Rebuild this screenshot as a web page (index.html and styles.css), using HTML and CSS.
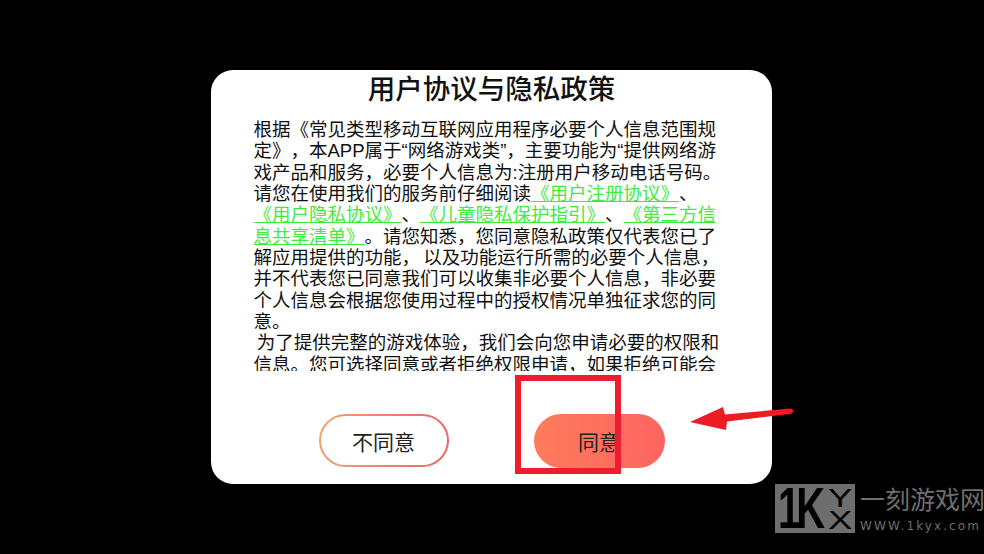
FILE: index.html
```html
<!DOCTYPE html>
<html lang="zh-CN">
<head>
<meta charset="utf-8">
<title>用户协议与隐私政策</title>
<link rel="stylesheet" href="styles.css">
</head>
<body>
<main class="card">
  <h1 class="title">用户协议与隐私政策</h1>
  <div class="content">
    <p class="body-text">根据《常见类型移动互联网应用程序必要个人信息范围规<br>定》，本APP属于“网络游戏类”，主要功能为“提供网络游<br>戏产品和服务，必要个人信息为:注册用户移动电话号码。<br>请您在使用我们的服务前仔细阅读<a class="link">《用户注册协议》</a>、<br><a class="link">《用户隐私协议》</a>、<a class="link">《儿童隐私保护指引》</a>、<a class="link">《第三方信<br>息共享清单》</a>。请您知悉，您同意隐私政策仅代表您已了<br>解应用提供的功能，<span class="thin-space">&nbsp;</span>以及功能运行所需的必要个人信息，<br>并不代表您已同意我们可以收集非必要个人信息，非必要<br>个人信息会根据您使用过程中的授权情况单独征求您的同<br>意。<br><span class="thin-space">&nbsp;</span>为了提供完整的游戏体验，我们会向您申请必要的权限和<br>信息。您可选择同意或者拒绝权限申请，如果拒绝可能会</p>
  </div>
  <div class="actions">
    <button class="btn btn-outline"><span class="btn-outline-inner">不同意</span></button>
    <button class="btn btn-solid">同意</button>
  </div>
</main>
<div class="red-box"></div>
<svg class="arrow" width="110" height="30" viewBox="0 0 110 30"><path d="M0 16 L33 1 L35 8.500 L100 2.500 Q103 2.500 103 5 Q103 7.500 100 8 L37 15.500 L36 24 Z" fill="#ed1c24"/></svg>
<div class="watermark">
  <div class="wm-logo"><span class="wm-big">1K</span><span class="wm-small"><span>Y</span><span>X</span></span></div>
  <div class="wm-text"><span class="wm-cn">一刻游戏网</span><span class="wm-url">WWW.1kyx.com</span></div>
</div>
</body>
</html>
```
FILE: styles.css
```css
* { box-sizing: border-box; }
html, body { margin: 0; height: 100%; }
body {
  background: #000;
  display: flex;
  align-items: center;
  justify-content: center;
  font-family: "Liberation Sans", "Noto Sans CJK SC", sans-serif;
  overflow: hidden;
}
.card {
  width: 561px;
  height: 414px;
  background: #fff;
  border-radius: 22px;
  display: flex;
  flex-direction: column;
  align-items: center;
  margin-left: -1px;
}
.title {
  margin: 0;
  padding-top: 2px;
  font-size: 27.5px;
  line-height: 36px;
  font-weight: 500;
  color: #111;
}
.content {
  margin-top: 11px;
  width: 476px;
  height: 252px;
  overflow: hidden;
}
.body-text {
  margin: 0;
  font-size: 18.5px;
  line-height: 21.35px;
  white-space: nowrap;
  color: #111;
  text-spacing-trim: space-all;
  text-autospace: no-autospace;
}
.thin-space { letter-spacing: -2px; }
.link { color: #3dec3d; text-decoration: underline; }
.actions {
  margin-top: 43px;
  display: flex;
  gap: 85px;
}
.btn {
  width: 130px;
  height: 53px;
  border: 0;
  padding: 0;
  border-radius: 27px;
  font-family: inherit;
  font-size: 21px;
  color: #222;
}
.btn-outline {
  background: linear-gradient(90deg, #f3a070, #e8686a);
  padding: 2px;
}
.btn-outline-inner {
  display: flex;
  align-items: center;
  justify-content: center;
  width: 100%;
  height: 100%;
  background: #fff;
  border-radius: 25px;
}
.btn-solid {
  width: 131px;
  height: 54px;
  background: linear-gradient(90deg, #fe7c5c, #fe6461);
}
.red-box {
  position: absolute;
  left: 515px;
  top: 375px;
  width: 106px;
  height: 99px;
  border: 6px solid #ed1c2e;
}
.arrow {
  position: absolute;
  left: 690px;
  top: 406px;
}
.watermark {
  position: absolute;
  left: 775px;
  top: 484px;
  display: flex;
  gap: 5px;
  color: #6e6e6e;
}
.wm-logo {
  width: 80px;
  height: 49px;
  background: #6e6e6e;
  color: #000;
  display: flex;
  align-items: center;
  justify-content: space-between;
  padding: 0 3px 0 3px;
  font-family: "Liberation Sans", sans-serif;
  font-weight: 700;
}
.wm-big {
  display: block;
  font-size: 40px;
  line-height: 49px;
  letter-spacing: -4px;
  transform: scaleY(1.45);
}
.wm-small {
  display: flex;
  flex-direction: column;
  font-size: 26px;
  line-height: 22px;
  font-weight: 400;
  transform: scaleX(1.4);
  transform-origin: right center;
}
.wm-text { display: flex; flex-direction: column; }
.wm-cn { font-size: 25px; line-height: 32px; white-space: nowrap; }
.wm-url {
  margin-top: 3px;
  font-size: 12px;
  line-height: 14px;
  letter-spacing: 2.1px;
  white-space: nowrap;
  font-family: "DejaVu Sans", sans-serif;
}
```
